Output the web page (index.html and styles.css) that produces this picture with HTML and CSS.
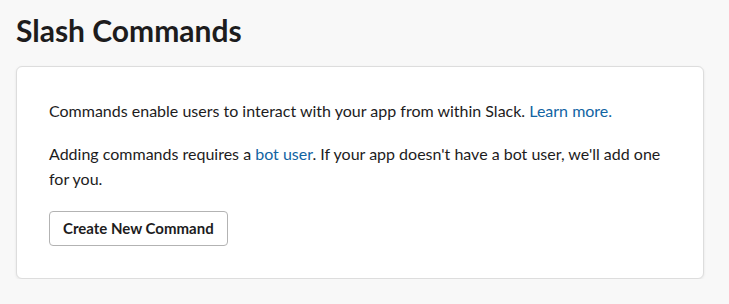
FILE: index.html
```html
<!DOCTYPE html>
<html>
<head>
<meta charset="utf-8">
<link rel="stylesheet" href="styles.css">
</head>
<body>
<div class="page">
  <h1 class="title">Slash Commands</h1>
  <div class="card">
    <p class="para">Commands enable users to interact with your app from within Slack. <a class="link" href="#">Learn more.</a></p>
    <p class="para">Adding commands requires a <a class="link" href="#">bot user</a>. If your app doesn't have a bot user, we'll add one for you.</p>
    <button class="btn">Create New Command</button>
  </div>
</div>
</body>
</html>
```
FILE: styles.css
```css
html, body {
  margin: 0;
  padding: 0;
  background: #f8f8f8;
}
body {
  font-family: Lato, "Noto Sans", sans-serif;
  color: #1d1c1d;
}
.page {
  padding: 10px 25px 0 16px;
}
.title {
  margin: 0 0 16px 0;
  font-size: 30px;
  font-weight: 700;
  line-height: 40px;
}
.card {
  background: #fff;
  border: 1px solid #dddddd;
  border-radius: 6px;
  box-shadow: 0 1px 3px rgba(0,0,0,0.08);
  padding: 31px 32px 32px 32px;
}
.para {
  margin: 0 0 17px 0;
  font-size: 16px;
  line-height: 25.6px;
}
.para + .para {
  margin-bottom: 19px;
}
.link {
  color: #1264a3;
  text-decoration: none;
}
.btn {
  display: block;
  font-family: Lato, "Noto Sans", sans-serif;
  font-size: 15px;
  font-weight: 700;
  color: #1d1c1d;
  background: #fff;
  border: 1px solid #b3b3b3;
  border-radius: 4px;
  height: 35px;
  padding: 0 13px;
  cursor: pointer;
}
```
